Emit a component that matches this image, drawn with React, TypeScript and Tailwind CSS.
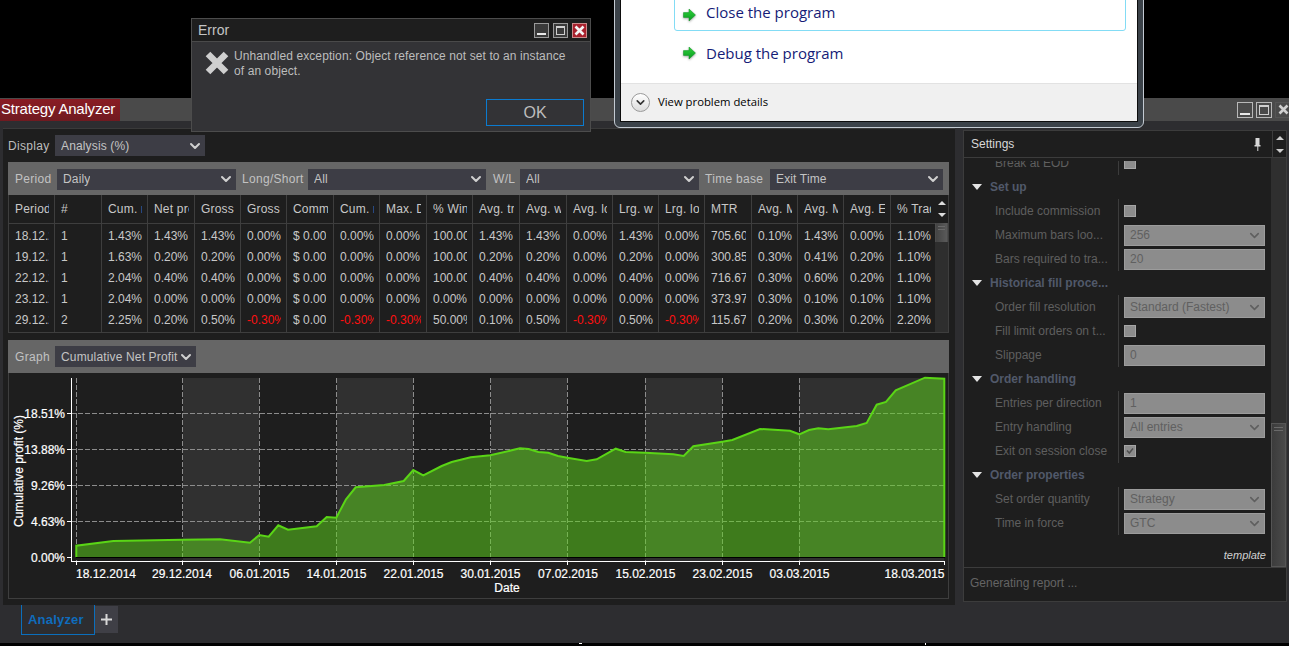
import { ChevronDown } from "lucide-react";

const widths = "grid-cols-[46px_47px_46px_47px_46px_46px_47px_46px_47px_46px_47px_47px_46px_46px_46px_47px_46px_46px_47px_46px]";

const headers = [
  "Period", "#", "Cum. net profit", "Net profit", "Gross profit", "Gross loss", "Commission", "Cum. max", "Max. Drawdown", "% Win",
  "Avg. trade", "Avg. winner", "Avg. loser", "Lrg. winner", "Lrg. loser", "MTR", "Avg. MAE", "Avg. MFE", "Avg. ETD", "% Trade",
];

const rows = [
  ["18.12.2014", "1", "1.43%", "1.43%", "1.43%", "0.00%", "$ 0.00", "0.00%", "0.00%", "100.00%", "1.43%", "1.43%", "0.00%", "1.43%", "0.00%", "705.60", "0.10%", "1.43%", "0.00%", "1.10%"],
  ["19.12.2014", "1", "1.63%", "0.20%", "0.20%", "0.00%", "$ 0.00", "0.00%", "0.00%", "100.00%", "0.20%", "0.20%", "0.00%", "0.20%", "0.00%", "300.85", "0.30%", "0.41%", "0.20%", "1.10%"],
  ["22.12.2014", "1", "2.04%", "0.40%", "0.40%", "0.00%", "$ 0.00", "0.00%", "0.00%", "100.00%", "0.40%", "0.40%", "0.00%", "0.40%", "0.00%", "716.67", "0.30%", "0.60%", "0.20%", "1.10%"],
  ["23.12.2014", "1", "2.04%", "0.00%", "0.00%", "0.00%", "$ 0.00", "0.00%", "0.00%", "0.00%", "0.00%", "0.00%", "0.00%", "0.00%", "0.00%", "373.97", "0.30%", "0.10%", "0.10%", "1.10%"],
  ["29.12.2014", "2", "2.25%", "0.20%", "0.50%", "-0.30%", "$ 0.00", "-0.30%", "-0.30%", "50.00%", "0.10%", "0.50%", "-0.30%", "0.50%", "-0.30%", "115.67", "0.20%", "0.30%", "0.20%", "2.20%"],
];

const linePoints =
  "76.3,545.7 113.3,541 182.3,539.7 220,539.3 250,542.7 259.3,535 268.7,536.7 278.3,525.3 288,529.7 316.7,526.3 326.7,517 336.3,517.7 346,499.3 355.7,487.3 384.3,485 403.7,481 413.3,470 423.3,475.3 441.7,466 451.7,462 470.7,457.3 490.3,455.3 520,448.3 528.7,449 538.3,452 548.3,452.7 558,456 567.3,457.7 586.7,461 596.7,459.3 615.7,448.7 625.7,452 645.3,452.7 673.3,454.3 683.7,456 693.3,446.3 722.3,441.7 732.3,440 760,429 790,430.7 799.3,434.3 809,430 818.3,428.3 828.3,429.3 856.7,426 866.7,423 876.7,404.7 886,402 895.7,390.3 925,377.7 944.3,378.7";

const gridX = [76.5, 182.5, 259.5, 336.5, 413.5, 490.5, 567.5, 645.5, 722.5, 799.5];
const bands = [[183, 259], [337, 413], [491, 567], [645, 722], [799, 944]];
const gridY = [
  { y: 413.5, label: "18.51%" },
  { y: 449.5, label: "13.88%" },
  { y: 485.5, label: "9.26%" },
  { y: 521.5, label: "4.63%" },
];
const dates = [
  { x: 106, label: "18.12.2014" },
  { x: 182, label: "29.12.2014" },
  { x: 259.5, label: "06.01.2015" },
  { x: 336.5, label: "14.01.2015" },
  { x: 413.5, label: "22.01.2015" },
  { x: 490.5, label: "30.01.2015" },
  { x: 568, label: "07.02.2015" },
  { x: 645.5, label: "15.02.2015" },
  { x: 722.5, label: "23.02.2015" },
  { x: 799.5, label: "03.03.2015" },
  { x: 914.5, label: "18.03.2015" },
];

const axisFont = "'Liberation Sans', sans-serif";

const Select = ({ label, className }: { label: string; className: string }) => (
  <div className={`flex h-[21px] items-center justify-between bg-[#3d3d45] pl-[6px] pr-[2px] text-[12px] tracking-[0.15px] text-[#c4c4c4] ${className}`}>
    <span className="truncate">{label}</span>
    <ChevronDown size={16} strokeWidth={3} className="shrink-0 text-[#d0d0d0]" />
  </div>
);

const WinButton = ({ kind, main }: { kind: "min" | "max" | "close"; main?: boolean }) => {
  const size = main ? "h-[16px] w-[16px]" : "h-[15px] w-[15px]";
  if (kind === "close") {
    return (
      <div className={`flex items-center justify-center border ${size} ${main ? "border-[#555] bg-[#4a4a4a]" : "border-[#c98a8a] bg-[#a8202c]"}`}>
        <svg width="11" height="11" viewBox="0 0 11 11">
          <path d="M1.5 1.5 9.5 9.5M9.5 1.5 1.5 9.5" stroke={main ? "#cfcfcf" : "#f4f4f4"} strokeWidth="2.6" />
        </svg>
      </div>
    );
  }
  return (
    <div className={`relative border ${size} ${main ? "border-[#b8b8b8] bg-[#4a4a4a]" : "border-[#9a9a9a] bg-[#3a3a3a]"}`}>
      {kind === "min" ? (
        <div className="absolute bottom-[2px] left-[2px] right-[2px] h-[2px] bg-[#e8e8e8]" />
      ) : (
        <div className="absolute inset-[2px] border border-t-[2px] border-[#cfcfcf]" />
      )}
    </div>
  );
};

const Triangle = () => (
  <svg width="10" height="6" viewBox="0 0 10 6" className="shrink-0">
    <path d="M0 0h10L5 6z" fill="#e4e4e4" />
  </svg>
);

const Group = ({ title }: { title: string }) => (
  <div className="flex h-[24px] items-center pl-[8px]">
    <Triangle />
    <span className="ml-[8px] text-[12px] font-bold text-[#51596a]">{title}</span>
  </div>
);

const Prop = ({ label, children }: { label: string; children: React.ReactNode }) => (
  <div className="flex h-[24px] items-center">
    <div className="w-[154px] shrink-0 truncate pl-[31px] pr-[2px] text-[12px] text-[#5f5f5f]">{label}</div>
    <div className="flex h-full flex-1 items-center border-l border-[#3c3c3c] pl-[5px]">{children}</div>
  </div>
);

const Field = ({ value, arrow }: { value: string; arrow?: boolean }) => (
  <div className="flex h-[21px] w-[141px] items-center justify-between border border-[#9c9c9c] bg-[#8c8c8c] pl-[5px] pr-[2px] text-[12px] text-[#606060]">
    <span>{value}</span>
    {arrow && <ChevronDown size={15} strokeWidth={2.5} className="text-[#5f5f5f]" />}
  </div>
);

const Check = ({ checked }: { checked?: boolean }) => (
  <div className="flex h-[12px] w-[12px] items-center justify-center border border-[#a5a5a5] bg-[#8c8c8c]">
    {checked && (
      <svg width="8" height="8" viewBox="0 0 8 8">
        <path d="M1 3.5 3.3 6 7 1.5" fill="none" stroke="#4f4f4f" strokeWidth="1.5" />
      </svg>
    )}
  </div>
);

const Grip = () => (
  <div className="flex flex-col gap-[2px] px-[2px] pt-[3px]">
    <div className="h-[1px] bg-[#6a6a6a]" />
    <div className="h-[1px] bg-[#6a6a6a]" />
  </div>
);

const GreenArrow = () => (
  <svg width="15" height="14" viewBox="0 0 15 14" className="shrink-0 drop-shadow-[0_1px_1px_rgba(0,0,0,0.35)]">
    <defs>
      <linearGradient id="go" x1="0" x2="0" y1="0" y2="1">
        <stop offset="0" stopColor="#2fd23a" />
        <stop offset="1" stopColor="#0a9c22" />
      </linearGradient>
    </defs>
    <path d="M7 1 13.5 7 7 13V9.4H1.5V4.6H7z" fill="url(#go)" stroke="#0c8f22" strokeWidth="0.5" />
  </svg>
);

const Chart = () => (
  <svg width="939" height="225" viewBox="9 373 939 225" className="block">
    {bands.map(([a, b]) => (
      <rect key={a} x={a} y={378} width={b - a} height={183} fill="#303030" />
    ))}
    {gridX.map((x) => (
      <line key={x} x1={x} x2={x} y1={378} y2={561} stroke="#8c8c8c" strokeDasharray="5 2" />
    ))}
    {gridY.map((g) => (
      <line key={g.y} x1={71} x2={944} y1={g.y} y2={g.y} stroke="#8c8c8c" strokeDasharray="5 2" />
    ))}
    <polygon points={`76.3,557 ${linePoints} 944.3,557`} fill="#5dd719" fillOpacity="0.5" />
    <polyline points={`76.3,557 ${linePoints} 944.3,557`} fill="none" stroke="#5ad516" strokeWidth="2" />
    <line x1={76} x2={945} y1={557.5} y2={557.5} stroke="#000" />
    <line x1={71.5} x2={71.5} y1={378} y2={562} stroke="#fff" />
    <line x1={71} x2={945} y1={561.5} y2={561.5} stroke="#fff" />
    {[...gridY, { y: 557.5, label: "0.00%" }].map((g) => (
      <g key={g.label}>
        <line x1={67} x2={71} y1={g.y} y2={g.y} stroke="#fff" />
        <text x={65} y={g.y + 4.5} textAnchor="end" fontSize="12" fill="#fff" stroke="#fff" strokeWidth="0.2" fontFamily={axisFont}>
          {g.label}
        </text>
      </g>
    ))}
    {[...gridX, 944.5].map((x) => (
      <line key={x} x1={x} x2={x} y1={561} y2={565} stroke="#fff" />
    ))}
    {dates.map((d) => (
      <text key={d.label} x={d.x} y={578} textAnchor="middle" fontSize="12" fill="#fff" stroke="#fff" strokeWidth="0.2" fontFamily={axisFont}>
        {d.label}
      </text>
    ))}
    <text x={507} y={591.5} textAnchor="middle" fontSize="12" fill="#fff" stroke="#fff" strokeWidth="0.2" fontFamily={axisFont}>
      Date
    </text>
    <text
      x={0}
      y={0}
      transform="translate(23 471) rotate(-90)"
      textAnchor="middle"
      fontSize="12"
      fill="#fff"
      stroke="#fff"
      strokeWidth="0.2"
      fontFamily={axisFont}
    >
      Cumulative profit (%)
    </text>
  </svg>
);

const ResultsTable = () => (
  <div className="relative border-x border-b border-[#3e3e3e] bg-[#1e1e1e]">
    <div className={`grid h-[29px] border-b border-[#3e3e3e] ${widths}`}>
      {headers.map((h, i) => (
        <div key={i} className="flex items-center overflow-hidden border-r border-[#3e3e3e] pl-[6px] pr-[5px]">
          <span className="block min-w-0 overflow-hidden whitespace-nowrap text-[12px] tracking-[0.2px] text-[#c8c8c8]">{h}</span>
        </div>
      ))}
    </div>
    <div className={`grid grid-rows-[21px_21px_21px_21px_24px] ${widths}`}>
      {rows.flatMap((row, r) =>
        row.map((cell, c) => (
          <div
            key={`${r}-${c}`}
            className={`flex overflow-hidden border-r border-[#3e3e3e] pl-[6px] pr-[5px] ${r === 4 ? "items-start pt-[3px]" : "items-center pt-[2px]"}`}
          >
            <span className={`block min-w-0 overflow-hidden whitespace-nowrap text-[12px] ${cell.startsWith("-") ? "text-[#ff1010]" : "text-[#c8c8c8]"}`}>
              {cell}
            </span>
          </div>
        )),
      )}
    </div>
    {/* table scroller */}
    <div className="absolute bottom-0 right-0 top-0 flex w-[13px] flex-col bg-[#2e2e2e]">
      <div className="flex h-[28px] flex-col items-center justify-center gap-[8px] bg-[#1e1e1e]">
        <svg width="8" height="4" viewBox="0 0 8 4"><path d="M0 4h8L4 0z" fill="#ddd" /></svg>
        <svg width="8" height="4" viewBox="0 0 8 4"><path d="M0 0h8L4 4z" fill="#ddd" /></svg>
      </div>
      <div className="h-[19px] border-x border-[#4c4c4c] bg-gradient-to-r from-[#444] to-[#5a5a5a]">
        <Grip />
      </div>
    </div>
  </div>
);

const App = () => {
  return (
    <div className="relative h-[646px] w-[1289px] overflow-hidden bg-black font-['Liberation_Sans',sans-serif] text-[12px]">
      <div className="h-[98px]" />

      {/* main window */}
      <div className="flex h-[23px] items-center justify-between bg-[#4a4a4a]">
        <div className="flex h-[22px] w-[120px] items-center bg-gradient-to-b from-[#8a1c24] to-[#701a20] pl-[1px] text-[15px] tracking-[-0.2px] text-white">
          Strategy Analyzer
        </div>
        <div className="mr-[-2px] flex gap-[3px]">
          <WinButton kind="min" main />
          <WinButton kind="max" main />
          <WinButton kind="close" main />
        </div>
      </div>

      <div className="flex h-[484px] bg-[#2d2d30]">
        <div className="ml-[3px] mt-[7px] h-[477px] w-[952px] border-t border-[#3a3a3a] bg-[#1e1e1e] px-[5px]">
          <div className="mt-[6px] flex items-center tracking-[0.3px]">
            <span className="w-[47px] text-[#bdbdbd]">Display</span>
            <Select label="Analysis (%)" className="w-[150px]" />
          </div>

          <div className="mt-[6px] flex h-[33px] w-[941px] items-center bg-[#666666] pt-[1px] tracking-[0.3px] text-[#c2c2c2]">
            <span className="ml-[7px] w-[42px]">Period</span>
            <Select label="Daily" className="w-[179px]" />
            <span className="ml-[6px] w-[66px]">Long/Short</span>
            <Select label="All" className="w-[178px]" />
            <span className="ml-[7px] w-[27px]">W/L</span>
            <Select label="All" className="w-[179px]" />
            <span className="ml-[6px] w-[65px]">Time base</span>
            <Select label="Exit Time" className="w-[173px]" />
          </div>

          <div className="w-[941px]">
            <ResultsTable />
          </div>

          <div className="mt-[7px] flex h-[33px] w-[941px] items-center bg-[#666666] tracking-[0.3px] text-[#c2c2c2]">
            <span className="ml-[7px] w-[40px]">Graph</span>
            <Select label="Cumulative Net Profit" className="w-[141px]" />
          </div>
          <div className="w-[941px] border-x border-b border-[#3e3e3e]">
            <Chart />
          </div>
        </div>

        <div className="ml-[8px] mt-[9px] flex h-[472px] w-[324px] flex-col border border-[#3c3c3c] bg-[#1e1e1e]">
          <div className="flex h-[27px] shrink-0 items-center border-b border-[#3c3c3c] pl-[7px] text-[#d8d8d8]">
            <span className="flex-1">Settings</span>
            <svg width="7" height="14" viewBox="0 0 7 14" className="mr-[11px]">
              <path d="M1.5 1h4v7h1v1.5h-2.2V14h-1V9.5H.5V8h1z" fill="#d8d8d8" />
            </svg>
            <div className="flex h-full w-[14px] flex-col items-center justify-center gap-[9px] border-l border-[#3c3c3c]">
              <svg width="8" height="4" viewBox="0 0 8 4"><path d="M0 4h8L4 0z" fill="#ccc" /></svg>
              <svg width="8" height="4" viewBox="0 0 8 4"><path d="M0 0h8L4 4z" fill="#ccc" /></svg>
            </div>
          </div>

          <div className="flex h-[410px] shrink-0 border-b border-[#3c3c3c]">
            <div className="flex-1 pt-[3px]">
              <div className="h-full overflow-hidden">
                <div className="mt-[-10px]">
                  <Prop label="Break at EOD"><Check /></Prop>
                  <Group title="Set up" />
                  <Prop label="Include commission"><Check /></Prop>
                  <Prop label="Maximum bars loo..."><Field value="256" arrow /></Prop>
                  <Prop label="Bars required to tra..."><Field value="20" /></Prop>
                  <Group title="Historical fill proce..." />
                  <Prop label="Order fill resolution"><Field value="Standard (Fastest)" arrow /></Prop>
                  <Prop label="Fill limit orders on t..."><Check /></Prop>
                  <Prop label="Slippage"><Field value="0" /></Prop>
                  <Group title="Order handling" />
                  <Prop label="Entries per direction"><Field value="1" /></Prop>
                  <Prop label="Entry handling"><Field value="All entries" arrow /></Prop>
                  <Prop label="Exit on session close"><Check checked /></Prop>
                  <Group title="Order properties" />
                  <Prop label="Set order quantity"><Field value="Strategy" arrow /></Prop>
                  <Prop label="Time in force"><Field value="GTC" arrow /></Prop>
                  <div className="mt-[12px] pr-[5px] text-right text-[11px] italic text-[#d0d0d0]">template</div>
                </div>
              </div>
            </div>
            <div className="flex w-[15px] shrink-0 flex-col justify-end bg-[#2f2f2f]">
              <div className="h-[144px] border border-[#555] bg-gradient-to-r from-[#3c3c3c] to-[#4a4a4a]">
                <Grip />
              </div>
            </div>
          </div>

          <div className="pl-[6px] pt-[6px] text-[#646464]">Generating report ...</div>
        </div>
      </div>

      {/* tab strip */}
      <div className="flex h-[38px] items-start bg-[#2d2d30] pl-[21px]">
        <div className="flex h-[30px] w-[74px] items-center border-x border-b border-[#0b6fbd] pl-[6px] text-[13px] font-bold tracking-[0.2px] text-[#0f6cbd]">
          Analyzer
        </div>
        <div className="mt-[1px] flex h-[27px] w-[23px] items-center justify-center bg-[#3f3f46] text-[#d4d4d4]">
          <svg width="11" height="11" viewBox="0 0 11 11"><path d="M5.5 0v11M0 5.5h11" stroke="#d8d8d8" strokeWidth="2" /></svg>
        </div>
      </div>

      {/* Error dialog */}
      <div className="absolute left-[191px] top-[18px] h-[114px] w-[400px] border border-[#4c4c4c] bg-[#333336]">
        <div className="flex h-[23px] items-center justify-between border-b border-[#4a4a4a] bg-[#1e1e1e] pl-[6px] pr-[3px] text-[14px] text-[#c4c4c4]">
          <span>Error</span>
          <div className="flex gap-[4px]">
            <WinButton kind="min" />
            <WinButton kind="max" />
            <WinButton kind="close" />
          </div>
        </div>
        <div className="flex pl-[12px] pt-[7px]">
          <svg width="26" height="26" viewBox="0 0 26 26" className="mt-[1px] shrink-0">
            <path d="M4 4 22 22M22 4 4 22" stroke="#cfcfcf" strokeWidth="6.5" />
          </svg>
          <p className="ml-[4px] w-[340px] text-[12px] leading-[15px] tracking-[0.1px] text-[#bdbdbd]">
            Unhandled exception: Object reference not set to an instance of an object.
          </p>
        </div>
        <div className="absolute bottom-[5px] right-[6px] flex h-[27px] w-[98px] items-center justify-center border border-[#0b7bd0] text-[16px] text-[#bdbdbd]">
          OK
        </div>
      </div>

      {/* system crash dialog */}
      <div className="absolute left-[614px] top-[-10px] h-[138px] w-[530px] rounded-b-[6px] border border-[#c3cad2] bg-[#3b4249] px-[5px] pb-[5px]">
        <div className="h-full border border-[#0c0c0c] bg-white font-['Open_Sans',sans-serif]">
          <div className="flex h-[91px] flex-col">
            <div className="ml-[53px] flex h-[39px] w-[452px] items-end rounded-[3px] border border-[#83dcf5] pb-[8px] pl-[7px]">
              <GreenArrow />
              <span className="ml-[9px] text-[15px] leading-[20px] text-[#151c77]">Close the program</span>
            </div>
            <div className="ml-[61px] mt-[12px] flex items-center">
              <GreenArrow />
              <span className="ml-[9px] text-[15px] leading-[20px] text-[#151c77]">Debug the program</span>
            </div>
          </div>
          <div className="flex h-[38px] items-center border-t border-[#e2e2e2] bg-[#f0f0f0] pl-[10px]">
            <div className="flex h-[19px] w-[19px] items-center justify-center rounded-full border border-[#9a9a9a] bg-gradient-to-b from-white to-[#dcdcdc]">
              <ChevronDown size={13} strokeWidth={3} className="text-[#333]" />
            </div>
            <span className="ml-[8px] text-[11.3px] text-black">View problem details</span>
          </div>
        </div>
      </div>

      <div className="absolute left-[579px] top-[643px] h-[1px] w-[3px] bg-white" />
      <div className="absolute left-[925px] top-[643px] h-[2px] w-[1px] bg-white" />
    </div>
  );
};

export default App;
